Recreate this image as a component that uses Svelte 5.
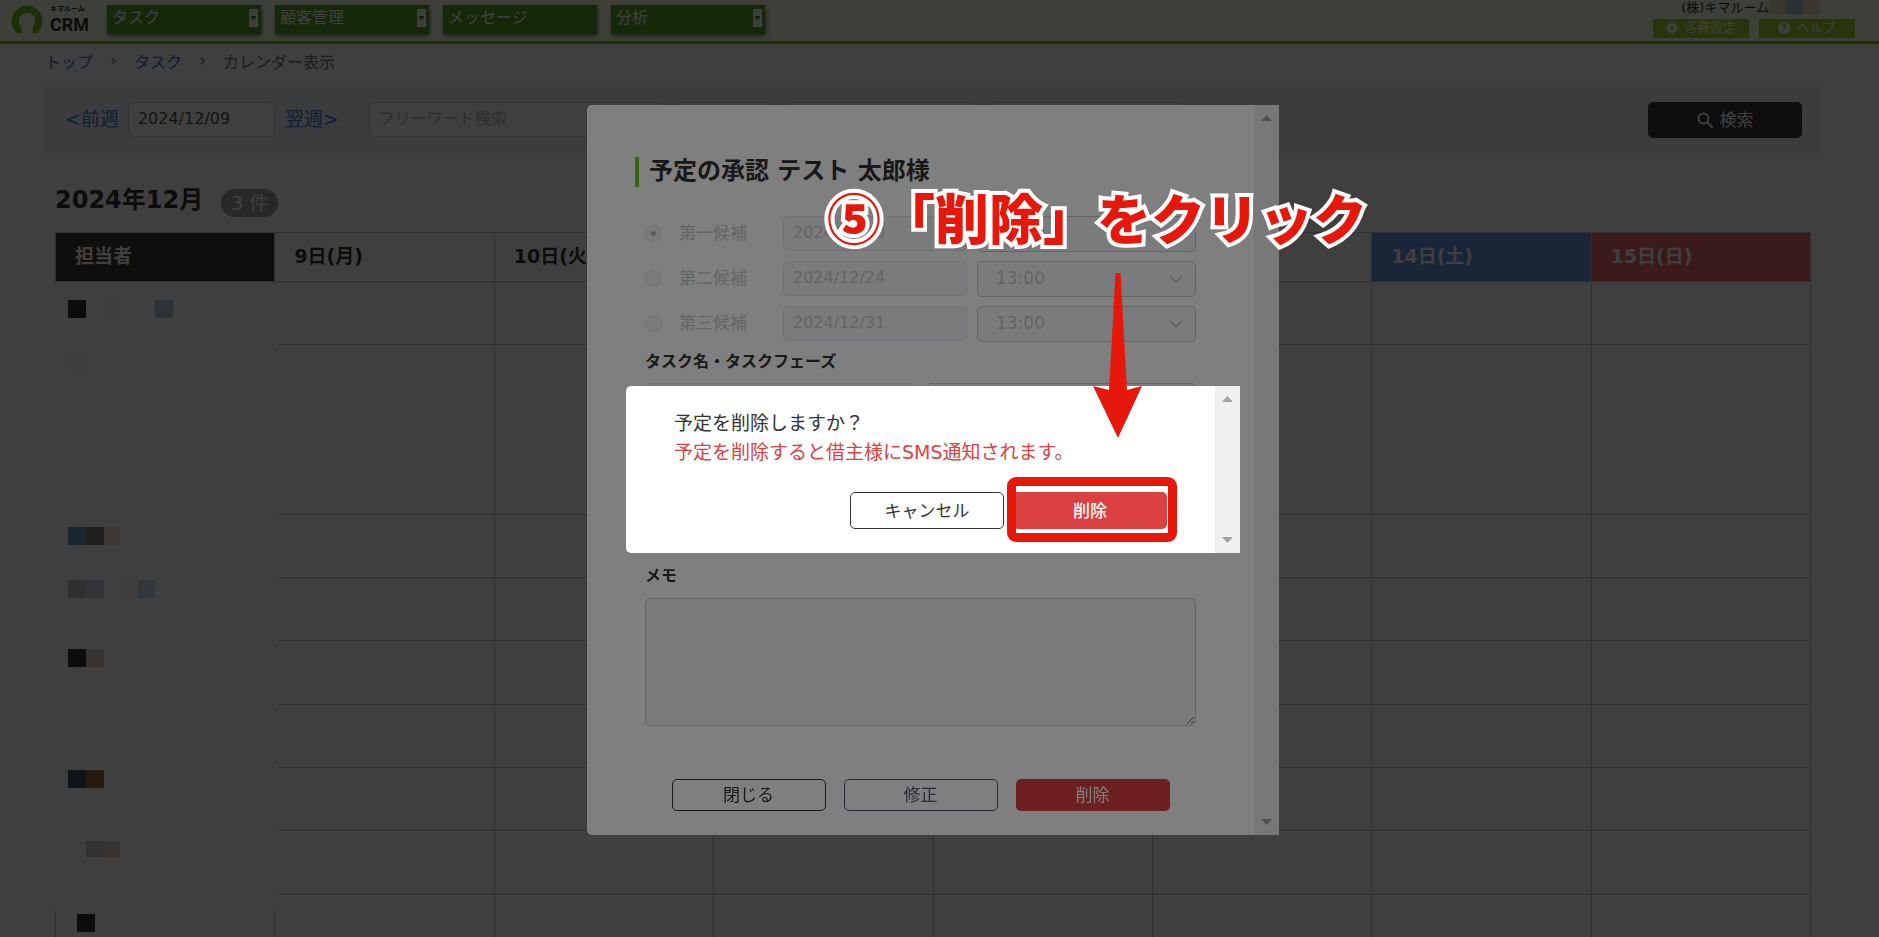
<script>
	const navItems = [
		{ label: 'タスク', menu: true },
		{ label: '顧客管理', menu: true },
		{ label: 'メッセージ', menu: false },
		{ label: '分析', menu: true }
	];

	const days = [
		{ label: '9日(月)', kind: '' },
		{ label: '10日(火)', kind: '' },
		{ label: '11日(水)', kind: '' },
		{ label: '12日(木)', kind: '' },
		{ label: '13日(金)', kind: '' },
		{ label: '14日(土)', kind: 'sat' },
		{ label: '15日(日)', kind: 'sun' }
	];

	const rowHeights = [63, 170, 63, 63, 64, 63, 63, 64, 64];

	// masked staff names: [x, y, width, height, colour]
	const blocks = [
		[13, 16, 18, 18, '#303030'],
		[49, 16, 16, 18, '#f8f8f8'],
		[100, 16, 18, 18, '#b4c4e0'],
		[13, 70, 18, 17, '#f6fdfa'],
		[13, 243, 18, 18, '#6c9cbc'],
		[31, 243, 18, 18, '#80807a'],
		[49, 243, 16, 18, '#f0e0cc'],
		[13, 296, 18, 18, '#c0c0c4'],
		[31, 296, 18, 18, '#d0d2e0'],
		[65, 296, 18, 18, '#fcf8f2'],
		[83, 296, 17, 18, '#c8dcec'],
		[13, 365, 18, 18, '#303030'],
		[31, 365, 18, 18, '#dcccc0'],
		[13, 486, 18, 18, '#385064'],
		[31, 486, 18, 18, '#986c38'],
		[31, 557, 18, 16, '#c8cacc'],
		[49, 557, 16, 16, '#d8ccc4'],
		[22, 630, 18, 18, '#303030']
	];

	const candidates = [
		{ id: 'c1', label: '第一候補', date: '2024/12/23', time: '13:00' },
		{ id: 'c2', label: '第二候補', date: '2024/12/24', time: '13:00' },
		{ id: 'c3', label: '第三候補', date: '2024/12/31', time: '13:00' }
	];

	let chosen = $state('c1');
</script>

{#snippet scrollbar()}
	<div class="scrollbar">
		<svg width="11" height="6" viewBox="0 0 11 6"><path d="M0 6 5.500 0 11 6z" /></svg>
		<svg width="11" height="6" viewBox="0 0 11 6"><path d="M0 0h11L5.500 6z" /></svg>
	</div>
{/snippet}

<div class="page">
	<header>
		<a class="logo" href="#top">
			<svg width="32" height="30" viewBox="0 0 32 30">
				<path
					d="M6 29A15.500 15.500 0 1 1 26 29H21.500L22 23A8.300 8.300 0 1 0 10 23L10.800 29z"
				/>
			</svg>
			<span class="logoText">
				<small>キマルーム</small>
				<strong>CRM</strong>
			</span>
		</a>
		<nav>
			{#each navItems as item}
				<button class="navItem">
					<span>{item.label}</span>
					{#if item.menu}
						<svg width="9" height="18" viewBox="0 0 9 18">
							<rect width="9" height="18" fill="#fff" />
							<path d="M1.500 7h6l-3 5z" fill="#4c9420" />
						</svg>
					{/if}
				</button>
			{/each}
		</nav>
		<div class="account">
			<div class="company">
				<span>(株)キマルーム</span>
				<i class="sand"></i><i class="blue"></i><i class="sand"></i>
			</div>
			<div class="tools">
				<button>
					<svg width="12" height="12" viewBox="0 0 12 12">
						<path
							d="M6 0v12M0 6h12M1.800 1.800l8.400 8.400M10.200 1.800l-8.400 8.400"
							stroke="#fff"
							stroke-width="2.400"
						/>
						<circle cx="6" cy="6" r="3.200" fill="none" stroke="#fff" stroke-width="2.400" />
						<circle cx="6" cy="6" r="1.900" fill="#a0d028" />
					</svg>
					各種設定
				</button>
				<button>
					<svg width="12" height="12" viewBox="0 0 12 12">
						<circle cx="6" cy="6" r="6" fill="#fff" />
						<path
							d="M4.200 4.700C4.200 2.400 7.800 2.500 7.800 4.600 7.800 5.800 6 5.800 6 7.200M6 8.200v1.500"
							fill="none"
							stroke="#90c020"
							stroke-width="1.500"
						/>
					</svg>
					ヘルプ
				</button>
			</div>
		</div>
	</header>

	<main>
		<div class="breadcrumb">
			<a href="#top">トップ</a>
			<svg width="5" height="8" viewBox="0 0 5 8"><path d="M1 1l3 3-3 3" /></svg>
			<a href="#task">タスク</a>
			<svg width="5" height="8" viewBox="0 0 5 8"><path d="M1 1l3 3-3 3" /></svg>
			<span>カレンダー表示</span>
		</div>

		<form class="filter">
			<a href="#prev">&lt;前週</a>
			<input class="date" type="text" value="2024/12/09" aria-label="日付" />
			<a href="#next">翌週&gt;</a>
			<input class="word" type="text" placeholder="フリーワード検索" aria-label="フリーワード検索" />
			<input class="short" type="text" aria-label="店舗" />
			<input class="mid" type="text" aria-label="担当者" />
			<input class="mid" type="text" aria-label="フェーズ" />
			<button type="button" class="search">
				<svg width="17" height="17" viewBox="0 0 17 17">
					<circle cx="6.500" cy="6.500" r="5" />
					<path d="M10.200 10.200l5.500 5.500" />
				</svg>
				検索
			</button>
		</form>

		<div class="monthLine">
			<h1>2024年12月</h1>
			<span class="count">3 件</span>
		</div>

		<div class="calendar">
			<table>
				<thead>
					<tr>
						<th class="staff">担当者</th>
						{#each days as day}
							<th class={day.kind}>{day.label}</th>
						{/each}
					</tr>
				</thead>
				<tbody>
					{#each rowHeights as height}
						<tr style:height="{height}px">
							<td></td>
							{#each days as day}
								<td></td>
							{/each}
						</tr>
					{/each}
				</tbody>
			</table>
			<div class="mask">
				{#each blocks as [x, y, w, h, color]}
					<i
						style:left="{x}px"
						style:top="{y}px"
						style:width="{w}px"
						style:height="{h}px"
						style:background={color}
					></i>
				{/each}
			</div>
		</div>
	</main>
</div>

<div class="overlay">
	<section class="modal" role="dialog" aria-label="予定の承認">
		<div class="modalBody">
			<h2>予定の承認 テスト 太郎様</h2>
			<div class="fields">
				<div class="candidates">
					{#each candidates as item}
						<input
							type="radio"
							id={item.id}
							name="candidate"
							value={item.id}
							bind:group={chosen}
							disabled
						/>
						<label for={item.id}>{item.label}</label>
						<input class="day" type="text" value={item.date} aria-label="日付" disabled />
						<div class="select">
							<select aria-label="時間" disabled>
								<option>{item.time}</option>
							</select>
							<svg width="14" height="8" viewBox="0 0 14 8"><path d="M1 1l6 6 6-6" /></svg>
						</div>
					{/each}
				</div>

				<h3>タスク名・タスクフェーズ</h3>
				<div class="pair">
					<input type="text" aria-label="タスク名" disabled />
					<input class="dark" type="text" aria-label="タスクフェーズ" disabled />
				</div>

				<label class="memoLabel" for="memo">メモ</label>
				<textarea id="memo"></textarea>

				<div class="actions">
					<button>閉じる</button>
					<button class="edit">修正</button>
					<button class="danger">削除</button>
				</div>
			</div>
		</div>
		{@render scrollbar()}
	</section>
</div>

<div class="overlay">
	<section class="confirm" role="dialog" aria-label="削除の確認">
		<div class="confirmBody">
			<p>予定を削除しますか？</p>
			<p class="warn">予定を削除すると借主様にSMS通知されます。</p>
			<div class="confirmActions">
				<button>キャンセル</button>
				<div class="marked">
					<button class="danger">削除</button>
				</div>
			</div>
		</div>
		{@render scrollbar()}
		<div class="caption">⑤「削除」をクリック</div>
		<svg class="arrow" width="50" height="165" viewBox="0 0 50 165">
			<path d="M22.500 0h5L34 117 49 113 25 165 0 113 16 117z" />
		</svg>
	</section>
</div>

<style>
	:global(body) {
		overflow: hidden;
		font-family: 'DejaVu Sans', 'Noto Sans CJK JP', sans-serif;
		font-size: 16px;
		color: #333;
	}
	button,
	input,
	select,
	textarea {
		box-sizing: border-box;
		margin: 0;
		font: inherit;
	}
	button {
		cursor: pointer;
	}
	a {
		color: #4080d0;
		text-decoration: none;
	}
	.page {
		height: 100vh;
		overflow: hidden;
		background: #fff;
	}

	/* header */
	header {
		display: flex;
		height: 41px;
		border-bottom: 3px solid #78c000;
		background: #f4fee4;
	}
	.logo {
		display: flex;
		gap: 7px;
		width: 96px;
		padding: 4px 0 0 11px;
		color: #333;
	}
	.logo svg {
		fill: #72c01c;
	}
	.logoText {
		display: flex;
		flex-direction: column;
	}
	.logoText small {
		font-size: 7px;
		font-weight: 700;
		line-height: 11px;
	}
	.logoText strong {
		font-family: Roboto, sans-serif;
		font-size: 18px;
		line-height: 20px;
	}
	nav {
		display: flex;
		gap: 14px;
		padding-top: 5px;
	}
	.navItem {
		display: flex;
		justify-content: space-between;
		width: 154px;
		height: 29px;
		padding: 4px 3px 0 5px;
		border: 0;
		background: #58a028;
		box-shadow: 1px 2px 4px rgba(0, 0, 0, 0.5);
		color: #fff;
		line-height: 18px;
	}
	.account {
		display: flex;
		flex-direction: column;
		align-items: flex-end;
		margin-left: auto;
		padding-right: 24px;
	}
	.company {
		display: flex;
		height: 19px;
		padding-right: 35px;
		font-size: 13px;
		line-height: 16px;
	}
	.company i {
		width: 17px;
		height: 14px;
	}
	.company .sand {
		background: #ecdcb0;
	}
	.company .blue {
		background: #a8c4cc;
	}
	.tools {
		display: flex;
		gap: 10px;
	}
	.tools button {
		display: flex;
		align-items: center;
		justify-content: center;
		gap: 6px;
		width: 96px;
		height: 19px;
		padding: 0 0 2px;
		border: 0;
		background: #a0d028;
		color: #fff;
		font-size: 13px;
		line-height: 16px;
	}

	/* page body */
	main {
		padding: 0 58px 0 45px;
	}
	.breadcrumb {
		display: flex;
		align-items: center;
		gap: 18px;
		height: 34px;
		padding-bottom: 4px;
		color: #707070;
	}
	.breadcrumb svg {
		fill: none;
		stroke: #a0a0a0;
		stroke-width: 2;
	}
	.filter {
		display: flex;
		align-items: flex-start;
		height: 56px;
		padding: 20px 19px 0 20px;
		border-radius: 5px;
		background: #eef2fb;
	}
	.filter a {
		font-size: 19px;
		line-height: 34px;
	}
	.filter input {
		height: 35px;
		padding: 0 9px 2px;
		border: 1px solid #c4c4c4;
		border-radius: 5px;
		background: #fff;
		color: #505050;
	}
	.filter input::placeholder {
		color: #b8b8b8;
	}
	.filter .date {
		width: 147px;
		margin: 0 10px 0 9px;
	}
	.filter .word {
		width: 295px;
		margin: 0 12px 0 30px;
	}
	.filter .short {
		width: 96px;
		margin-right: 11px;
	}
	.filter .mid {
		width: 195px;
		margin-right: 11px;
	}
	.search {
		display: flex;
		align-items: center;
		justify-content: center;
		gap: 6px;
		width: 154px;
		height: 36px;
		margin-left: auto;
		border: 0;
		border-radius: 5px;
		background: #3a3a3a;
		color: #fff;
		font-size: 17px;
		line-height: 20px;
	}
	.search svg {
		fill: none;
		stroke: #fff;
		stroke-width: 2;
	}
	.monthLine {
		display: flex;
		align-items: center;
		gap: 18px;
		height: 44px;
		padding: 20px 0 10px 10px;
	}
	h1 {
		margin: 0;
		font-size: 24px;
		line-height: 34px;
	}
	.count {
		margin-top: 6px;
		padding: 0 10px;
		border-radius: 14px;
		background: #a0a0a0;
		color: #fff;
		font-size: 19px;
		line-height: 28px;
	}
	.calendar {
		position: relative;
		margin: 0 10px;
	}
	table {
		width: 100%;
		border-collapse: collapse;
		table-layout: fixed;
	}
	th,
	td {
		box-sizing: border-box;
		padding: 0 19px;
		border: 1px solid #c0c0c0;
	}
	th {
		height: 49px;
		padding-bottom: 2px;
		font-size: 19px;
		line-height: 28px;
		text-align: left;
	}
	th.staff {
		background: #3a3a3a;
		color: #fff;
	}
	th.sat {
		background: #6098e0;
		color: #fff;
	}
	th.sun {
		background: #e86868;
		color: #fff;
	}
	.mask {
		position: absolute;
		top: 52px;
		left: 0;
		width: 223px;
		height: 627px;
		background: #fff;
	}
	.mask i {
		position: absolute;
	}

	/* layered dialogs */
	.overlay {
		position: fixed;
		inset: 0;
		display: flex;
		align-items: center;
		justify-content: center;
		padding: 2px 13px 0 0;
		background: rgba(0, 0, 0, 0.5);
	}
	.modal,
	.confirm {
		position: relative;
		display: flex;
		border-radius: 5px 0 0 5px;
		background: #fff;
	}
	.modal {
		width: 692px;
		max-width: 90vw;
	}
	.confirm {
		width: 614px;
		max-width: 80vw;
	}
	.scrollbar {
		display: flex;
		flex-direction: column;
		align-items: center;
		justify-content: space-between;
		box-sizing: border-box;
		width: 25px;
		padding: 10px 0;
		background: #f0f0f0;
	}
	.scrollbar svg {
		fill: #a2a2a2;
	}
	.modalBody {
		flex: 1;
		padding: 52px 48px 24px;
	}
	h2 {
		margin: 0;
		padding: 0 0 2px 10px;
		border-left: 4px solid #70c818;
		font-size: 24px;
		line-height: 28px;
	}
	.fields {
		padding: 29px 10px 0;
	}
	.candidates {
		display: grid;
		grid-template-columns: 34px 104px 184px 1fr;
		row-gap: 9px;
		align-items: center;
	}
	.candidates label {
		padding-bottom: 2px;
		color: #c8cace;
		font-size: 17px;
		line-height: 24px;
	}
	.candidates input[type='radio'] {
		appearance: none;
		width: 17px;
		height: 17px;
		border: 1px solid #e0e2e8;
		border-radius: 50%;
		background: #f4f6fa;
	}
	.candidates input[type='radio']:checked {
		background: radial-gradient(circle, #b4b6bc 2px, #f4f6fa 3px);
	}
	.day,
	.pair input {
		width: 100%;
		height: 35px;
		padding: 0 9px 2px;
		border: 1px solid #e2e4ec;
		border-radius: 5px;
		background: #f4f6fa;
		color: #c8cace;
	}
	.select {
		position: relative;
		margin-left: 10px;
	}
	select {
		appearance: none;
		display: block;
		width: 100%;
		height: 36px;
		padding: 0 18px 2px;
		border: 1px solid #c8c8c8;
		border-radius: 5px;
		background: #f4f6fa;
		color: #c4c6ca;
		font-size: 17px;
		opacity: 1;
	}
	.select svg {
		position: absolute;
		top: 14px;
		right: 13px;
		fill: none;
		stroke: #bcbcbc;
		stroke-width: 1.2;
	}
	h3,
	.memoLabel {
		display: block;
		margin: 0;
		font-size: 16px;
		font-weight: 700;
		line-height: 24px;
	}
	h3 {
		margin-top: 8px;
	}
	.pair {
		display: grid;
		grid-template-columns: 1fr 1fr;
		gap: 10px;
		margin-top: 9px;
	}
	.pair .dark {
		border-color: #c8c8c8;
	}
	.memoLabel {
		margin-top: 146px;
	}
	textarea {
		display: block;
		width: 100%;
		height: 128px;
		margin-top: 10px;
		border: 1px solid #c8c8c8;
		border-radius: 5px;
		background: #f4f6fa;
	}
	.actions {
		display: flex;
		justify-content: center;
		gap: 18px;
		margin-top: 53px;
	}
	.actions button,
	.confirmActions button {
		width: 154px;
		height: 32px;
		padding: 0;
		border: 1px solid #333;
		border-radius: 5px;
		background: #fff;
		color: #333;
		font-size: 17px;
		line-height: 24px;
	}
	.actions .edit {
		border-color: #505070;
		color: #505870;
	}
	.actions .danger,
	.confirmActions .danger {
		border: 0;
		background: #db4141;
		color: #fff;
	}
	.confirmActions .danger {
		font-weight: 500;
	}
	.confirmBody {
		flex: 1;
		padding: 23px 48px 24px;
	}
	.confirmBody p {
		margin: 0;
		font-size: 19px;
		line-height: 29px;
	}
	.confirmBody .warn {
		color: #db4141;
	}
	.confirmActions {
		display: flex;
		justify-content: flex-end;
		gap: 9px;
		margin-top: 25px;
	}
	.confirmActions button {
		display: block;
		height: 37px;
	}
	.marked {
		position: relative;
	}
	.marked::after {
		content: '';
		position: absolute;
		inset: -15px -10px -13px -6px;
		border: 9px solid #e6180c;
		border-radius: 9px;
	}
	.caption {
		position: absolute;
		top: -209px;
		left: 201px;
		color: #e6180c;
		font-family: 'Noto Sans CJK JP', sans-serif;
		font-size: 54px;
		font-weight: 900;
		line-height: 80px;
		white-space: nowrap;
		-webkit-text-stroke: 8px #fff;
		paint-order: stroke fill;
	}
	.arrow {
		position: absolute;
		top: -113px;
		left: 467px;
		fill: #e6180c;
	}
</style>
